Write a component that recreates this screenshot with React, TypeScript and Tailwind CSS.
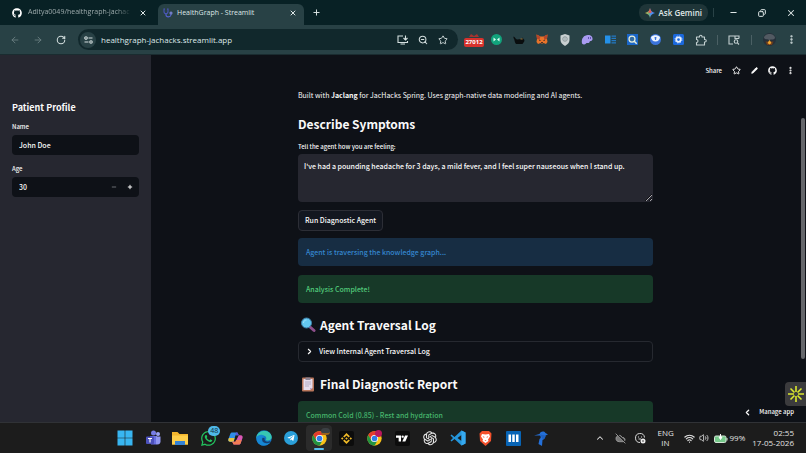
import { useState, type ReactNode } from "react";
import {
  ArrowLeft,
  ArrowRight,
  ChevronLeft,
  ChevronRight,
  ChevronUp,
  CloudOff,
  Copy,
  EllipsisVertical,
  Minus,
  Pencil,
  Plus,
  RotateCw,
  Star,
  Volume2,
  Wifi,
  X,
  ZoomOut,
} from "lucide-react";
import { FaGithub, FaTelegramPlane, FaWhatsapp } from "react-icons/fa";
import { AiOutlineOpenAI } from "react-icons/ai";
import { SiBinance } from "react-icons/si";

function IconButton({ label, className = "", children }: { label: string; className?: string; children: ReactNode }) {
  return (
    <button type="button" aria-label={label} className={`flex size-[18px] shrink-0 items-center justify-center ${className}`}>
      {children}
    </button>
  );
}

function ChromeLogo({ size = 15 }: { size?: number }) {
  return (
    <svg width={size} height={size} viewBox="0 0 48 48">
      <circle cx="24" cy="24" r="23" fill="#fbc116" />
      <path d="M4 12.500A23 23 0 0 1 44 12.500H24L14 29.800Z" fill="#e33b2e" />
      <path d="M4 12.500A23 23 0 0 0 24 47L34 29.700 24 35.500 14 29.800Z" fill="#229342" />
      <circle cx="24" cy="24" r="11.500" fill="#fff" />
      <circle cx="24" cy="24" r="9" fill="#2f7de8" />
    </svg>
  );
}

function GeminiSpark() {
  return (
    <svg width="10" height="10" viewBox="0 0 24 24">
      <defs>
        <linearGradient id="spark" x1="0" y1="0.500" x2="1" y2="0.500">
          <stop offset="0" stopColor="#e6c34a" />
          <stop offset="0.400" stopColor="#6fae7c" />
          <stop offset="0.600" stopColor="#4c8df6" />
          <stop offset="1" stopColor="#4a86f0" />
        </linearGradient>
      </defs>
      <path d="M12 0C13.500 7 17 10.500 24 12 17 13.500 13.500 17 12 24 10.500 17 7 13.500 0 12 7 10.500 10.500 7 12 0Z" fill="url(#spark)" />
      <path d="M12 0C13 5 14.500 8 17 10L12 12 7 10C9.500 8 11 5 12 0Z" fill="#e5584c" />
    </svg>
  );
}

function Stethoscope() {
  return (
    <svg width="10" height="10" viewBox="0 0 20 20" fill="none" strokeWidth="2.200">
      <path d="M4 2H2v5c0 6 8 6 8 0V2H8" stroke="#4a55b8" />
      <path d="M6 11v3c0 5 9 5 10 0v-2" stroke="#5563cf" />
      <circle cx="16" cy="10" r="2" stroke="#7c86d8" />
    </svg>
  );
}

function TabStrip() {
  return (
    <header className="flex h-[25px] shrink-0 items-end bg-[#082125] text-[#dfe7e7]">
      <div className="flex h-[25px] w-[158px] shrink-0 items-center pl-3">
        <FaGithub className="size-[10px] shrink-0 text-white" />
        <span className="ml-[6px] w-[104px] bg-linear-to-r from-[#a8b5b6] from-85% to-[#082125] bg-clip-text text-[7px] whitespace-nowrap text-transparent">
          Aditya0049/healthgraph-jachac
        </span>
        <button type="button" aria-label="Close tab" className="ml-[7px]">
          <X size={8} strokeWidth={3} />
        </button>
      </div>
      <div className="flex h-[21px] w-[146px] shrink-0 items-center rounded-t-md bg-[#284145] pb-[3px] pl-[5px]">
        <Stethoscope />
        <span className="ml-1 flex-1 text-[7px] whitespace-nowrap">HealthGraph - Streamlit</span>
        <button type="button" aria-label="Close tab" className="mr-[7px]">
          <X size={8} strokeWidth={3} />
        </button>
      </div>
      <button type="button" aria-label="New tab" className="ml-2 flex h-[25px] items-center">
        <Plus size={9} strokeWidth={2.500} />
      </button>
      <div className="ml-auto flex h-[25px] items-center">
        <button type="button" className="flex h-[17px] items-center gap-1 rounded-lg bg-[#1f3538] px-[6px] text-[8px] font-semibold">
          <GeminiSpark />
          Ask Gemini
        </button>
        <span className="ml-[5px] h-[9px] w-px bg-[#294246]" />
        <IconButton label="Minimize" className="ml-[10px]"><Minus size={9} strokeWidth={3} /></IconButton>
        <IconButton label="Restore" className="ml-[11px]"><Copy size={8} strokeWidth={3} className="-scale-x-100" /></IconButton>
        <IconButton label="Close window" className="mr-[6px] ml-[11px]"><X size={10} strokeWidth={2.500} /></IconButton>
      </div>
    </header>
  );
}

function Extensions() {
  return (
    <div className="ml-[7px] flex w-[245px] shrink-0 items-center justify-between">
      <IconButton label="Blocked requests" className="flex-col">
        <svg width="12" height="5" viewBox="0 0 12 5"><path d="M1 4 3 1l3 2 3-2 2 3Z" fill="#a3342f" /></svg>
        <span className="rounded-xs bg-[#d8322d] px-px text-[6px] leading-[9px] font-bold text-white">27012</span>
      </IconButton>
      <IconButton label="Green extension">
        <svg width="11" height="11" viewBox="0 0 22 22"><circle cx="11" cy="11" r="11" fill="#12a37c" /><path d="m5 7 5 4-5 4Zm12 0-5 4 5 4Z" fill="#d8fff2" /></svg>
      </IconButton>
      <IconButton label="Black cat">
        <svg width="12" height="10" viewBox="0 0 24 20"><path d="M1 3c3 0 3 5 7 6l9-1 2-3 2 3c3 2 2 5 0 7l-2 3H7C3 17 4 9 1 6Z" fill="#090d0e" /><path d="M15 7h5l-1 2h-4Z" fill="#93753c" /></svg>
      </IconButton>
      <IconButton label="Wallet fox">
        <svg width="12" height="11" viewBox="0 0 24 22">
          <path d="m1 1 8 4h6l8-4-1 9 1 6-3 4-5-2-3 2-3-2-5 2-3-4 1-6Z" fill="#e8732a" />
          <path d="m1 1 8 4-2 6-5-1Zm22 0-8 4 2 6 5-1Z" fill="#b5462a" />
          <path d="m6 11 4 2-3 1Zm12 0-4 2 3 1Z" fill="#2b2523" />
          <path d="M10 16h4l-1 3h-2Z" fill="#3a2a23" />
        </svg>
      </IconButton>
      <IconButton label="Shield">
        <svg width="10" height="12" viewBox="0 0 20 24"><path d="m10 0 9 3v9c0 6-4 9-9 12-5-3-9-6-9-12V3Z" fill="#c9d0d1" /><circle cx="10" cy="10" r="4.500" fill="none" stroke="#8c989b" strokeWidth="2" /><path d="M10 7v6" stroke="#8c989b" strokeWidth="1.500" /></svg>
      </IconButton>
      <IconButton label="Purple extension">
        <svg width="12" height="11" viewBox="0 0 24 22"><path d="M2 19C0 9 6 2 14 2c6 0 10 4 9 9-1 4-5 2-6 5-1 4-5 0-7 3-2 2-5 3-8 0Z" fill="#a99bf1" /><path d="M15 6v4m4-4v4" stroke="#5b4ba8" strokeWidth="1.800" /></svg>
      </IconButton>
      <IconButton label="Reader">
        <svg width="11" height="9" viewBox="0 0 22 18"><path d="M0 1h11v16H0Z" fill="#2491e8" /><path d="M13 2h9M13 6.500h9M13 11h9M13 15.500h9" stroke="#2379c4" strokeWidth="2.500" /></svg>
      </IconButton>
      <IconButton label="Page search">
        <svg width="11" height="11" viewBox="0 0 22 22"><path d="M0 0h22v22H0Z" fill="#1b67c9" /><circle cx="10" cy="10" r="6" fill="#326ca3" stroke="#e8eedb" strokeWidth="2.500" /><path d="m14.500 14.500 5 5" stroke="#e8eedb" strokeWidth="3" /></svg>
      </IconButton>
      <IconButton label="Privacy">
        <svg width="11" height="11" viewBox="0 0 22 22"><circle cx="11" cy="11" r="11" fill="#3b74dc" /><path d="M2 6c5-5 13-5 18 0 0 5-4 9-9 9S2 11 2 6Z" fill="#edf4ff" /><path d="M9 6h4l-1 6h-2Z" fill="#3b74dc" /></svg>
      </IconButton>
      <IconButton label="Blue settings">
        <svg width="11" height="11" viewBox="0 0 22 22"><rect width="22" height="22" rx="3" fill="#1b68dc" /><circle cx="11" cy="11" r="4.500" fill="none" stroke="#e7f1ff" strokeWidth="3.500" /><circle cx="11" cy="11" r="7" fill="none" stroke="#e7f1ff" strokeWidth="1.500" strokeDasharray="3 2.500" /></svg>
      </IconButton>
      <IconButton label="Extensions">
        <svg width="12" height="12" viewBox="0 0 24 24" fill="none" stroke="#c3d0d1" strokeWidth="2.200" strokeLinejoin="round">
          <path d="M3 6h6V5a2 2 0 0 1 5 0v1h5v5h1a2 2 0 0 1 0 5h-1v6H3v-5c4 0 4-6 0-6Z" />
        </svg>
      </IconButton>
    </div>
  );
}

function Toolbar() {
  return (
    <nav className="flex h-[30px] shrink-0 items-center border-b border-[#1a2c30] bg-[#284145] text-[#d4dfdf]">
      <div className="flex items-center gap-[5px] pl-[6px]">
        <IconButton label="Back" className="text-[#6f8386]"><ArrowLeft size={10} /></IconButton>
        <IconButton label="Forward" className="text-[#6f8386]"><ArrowRight size={10} /></IconButton>
        <IconButton label="Reload"><RotateCw size={10} strokeWidth={2.500} /></IconButton>
      </div>
      <div className="ml-2 flex h-[21px] min-w-0 flex-1 items-center rounded-full bg-[#11282c] pr-[6px] pl-[2px]">
        <span className="flex size-4 shrink-0 items-center justify-center rounded-full bg-[#284145]">
          <svg width="9" height="8" viewBox="0 0 18 16" fill="none" stroke="#d4dfdf" strokeWidth="2.200">
            <circle cx="4" cy="4" r="2.500" />
            <path d="M9 4h8M1 12h8" />
            <circle cx="14" cy="12" r="2.500" />
          </svg>
        </span>
        <input aria-label="Address" defaultValue="healthgraph-jachacks.streamlit.app" className="ml-[5px] min-w-0 flex-1 bg-transparent text-[8px] text-[#dfe9e9] outline-none" />
        <div className="flex gap-[2px]">
          <IconButton label="Install app">
            <svg width="12" height="10" viewBox="0 0 24 20" fill="none" stroke="currentColor" strokeWidth="2.200"><path d="M12 2H2v13h19v-3M7 18h9M17 1v9m-4-4 4 4 4-4" /></svg>
          </IconButton>
          <IconButton label="Zoom"><ZoomOut size={10} strokeWidth={2.500} /></IconButton>
          <IconButton label="Bookmark"><Star size={10} strokeWidth={2.200} /></IconButton>
        </div>
      </div>
      <Extensions />
      <div className="flex items-center pr-[6px]">
        <span className="mx-[7px] h-[10px] w-px bg-[#4b6064]" />
        <IconButton label="Tab search">
          <svg width="12" height="10" viewBox="0 0 24 20" fill="none" stroke="#c3d0d1" strokeWidth="2.200"><path d="M10 18H2V2h20v5M14 2v5h8" /><circle cx="16" cy="13" r="3.500" /><path d="m19 16 3 3" /></svg>
        </IconButton>
        <span className="mx-2 h-[10px] w-px bg-[#4b6064]" />
        <IconButton label="Profile">
          <svg width="13" height="13" viewBox="0 0 26 26"><circle cx="13" cy="13" r="13" fill="#26303a" /><path d="M2 10c0-5 6-8 11-8s11 3 11 8c-3 5-8 2-11 4C9 12 5 14 2 10Z" fill="#525a62" /><path d="M5 17h16l-3 7H8Z" fill="#6b3d1d" /><path d="m13 14 4 6-4 3-4-3Z" fill="#efa42f" /></svg>
        </IconButton>
        <IconButton label="Browser menu" className="ml-[4px]"><EllipsisVertical size={11} strokeWidth={3} /></IconButton>
      </div>
    </nav>
  );
}

function Sidebar() {
  const [age, setAge] = useState(30);
  return (
    <aside className="w-[151px] shrink-0 bg-[#262730] px-3 pt-[45px]">
      <h2 className="text-[9px] leading-4 font-bold">Patient Profile</h2>
      <label htmlFor="name" className="mt-[6px] block text-[6px] leading-[10px] font-medium">Name</label>
      <input id="name" defaultValue="John Doe" className="mt-[3px] block h-5 w-full rounded bg-[#0e1117] px-[7px] text-[7px] font-medium outline-none" />
      <label htmlFor="age" className="mt-[9px] block text-[6px] leading-[10px] font-medium">Age</label>
      <div className="mt-[3px] flex h-5 items-center rounded bg-[#0e1117] pr-px">
        <input id="age" inputMode="numeric" value={age} onChange={(e) => setAge(Number(e.target.value) || 0)} className="min-w-0 flex-1 bg-transparent pl-[7px] text-[7px] font-medium outline-none" />
        <button type="button" aria-label="Decrease age" onClick={() => setAge(age - 1)} className="flex size-4 items-center justify-center text-[#8a8b91]"><Minus size={6} strokeWidth={3} /></button>
        <button type="button" aria-label="Increase age" onClick={() => setAge(age + 1)} className="flex size-4 items-center justify-center"><Plus size={6} strokeWidth={4} /></button>
      </div>
    </aside>
  );
}

function Magnifier() {
  return (
    <svg width="16" height="16" viewBox="0 0 32 32">
      <path d="m19 19 9 8" stroke="#8d4f8b" strokeWidth="6" strokeLinecap="round" />
      <circle cx="13" cy="12" r="10" fill="#63c7ef" stroke="#3c7fa8" strokeWidth="2" />
      <path d="M7 12c0-4 3-6 6-6" stroke="#a5e5fb" strokeWidth="2" fill="none" />
    </svg>
  );
}

function Clipboard() {
  return (
    <svg width="16" height="16" viewBox="0 0 32 32">
      <rect x="4" y="3" width="24" height="28" rx="2" fill="#b9775c" />
      <path d="M7 6h18v18l-5 4H7Z" fill="#e6dcec" />
      <path d="m25 24-5 4v-4Z" fill="#b8a4c8" />
      <path d="M11 3h10v5H11Z" fill="#8b8393" />
      <path d="M10 12h12M10 16h12M10 20h8" stroke="#a79db7" strokeWidth="1.500" />
    </svg>
  );
}

function MainArea() {
  return (
    <main className="relative flex min-w-0 flex-1 overflow-hidden bg-[#0e1117]">
      <div className="min-w-0 flex-1 overflow-hidden">
        <div className="flex h-[30px] items-center justify-end pr-[1px]">
          <button type="button" className="mr-[5px] text-[6px] font-medium">Share</button>
          <IconButton label="Favorite"><Star size={9} strokeWidth={2.500} /></IconButton>
          <IconButton label="Edit"><Pencil size={7} fill="currentColor" /></IconButton>
          <IconButton label="View source"><FaGithub className="size-[9px]" /></IconButton>
          <IconButton label="App menu"><EllipsisVertical size={9} strokeWidth={3.500} /></IconButton>
        </div>
        <div className="mx-auto w-full max-w-[355px] pt-1">
          <p className="text-[7px] leading-3">Built with <strong>Jaclang</strong> for JacHacks Spring. Uses graph-native data modeling and AI agents.</p>
          <h2 className="mt-3 text-[12px] leading-[22px] font-bold">Describe Symptoms</h2>
          <label htmlFor="symptoms" className="mt-[7px] block text-[6px] leading-[10px] font-medium">Tell the agent how you are feeling:</label>
          <textarea
            id="symptoms"
            defaultValue="I've had a pounding headache for 3 days, a mild fever, and I feel super nauseous when I stand up."
            className="mt-[2px] block h-12 w-full resize-y rounded bg-[#262730] px-[6px] py-[6px] text-[7px] leading-3 font-medium outline-none scheme-dark"
          />
          <button type="button" className="mt-2 flex h-[21px] items-center rounded border border-[#2c2e36] bg-[#131720] px-[6px] text-[7px] font-medium">Run Diagnostic Agent</button>
          <p className="mt-[7px] flex h-7 items-center rounded bg-[#172d43] px-2 text-[7px] font-medium text-[#3587cf]">Agent is traversing the knowledge graph...</p>
          <p className="mt-[9px] flex h-7 items-center rounded bg-[#173928] px-2 text-[7px] font-medium text-[#52cb7b]">Analysis Complete!</p>
          <h2 className="mt-[11px] flex items-center gap-1 pl-[2px] text-[12px] leading-[22px] font-bold"><Magnifier />Agent Traversal Log</h2>
          <details className="mt-[5px] rounded border border-[#262930] text-[7px] font-medium">
            <summary className="flex h-[19px] list-none items-center gap-[5px] px-[6px]"><ChevronRight size={9} strokeWidth={3} />View Internal Agent Traversal Log</summary>
          </details>
          <h2 className="mt-[11px] flex items-center gap-1 pl-[2px] text-[12px] leading-[22px] font-bold"><Clipboard />Final Diagnostic Report</h2>
          <p className="mt-[6px] flex h-7 items-center rounded bg-[#173928] px-2 text-[7px] font-medium text-[#46b56c]">Common Cold (0.85) - Rest and hydration</p>
        </div>
      </div>
      <div className="w-[6px] shrink-0 pt-[63px]">
        <div className="ml-px h-[241px] w-1 rounded-full bg-[#65676b]" />
      </div>
      <button type="button" className="absolute right-3 bottom-1 flex items-center gap-[7px] text-[6px] leading-3 font-medium"><ChevronLeft size={9} strokeWidth={3.500} />Manage app</button>
      <button type="button" aria-label="Open assistant" className="absolute right-0 bottom-4 flex h-6 w-[21px] items-center justify-center rounded-l bg-[#3b3b3d]">
        <svg width="16" height="16" viewBox="0 0 32 32" stroke="#dce92e" strokeWidth="3.200">
          <path d="M16 0v12M16 20v12M0 16h12M20 16h12M5 5l8 8M19 19l8 8M5 27l8-8M19 13l8-8" />
        </svg>
      </button>
    </main>
  );
}

function Taskbar() {
  return (
    <footer className="flex h-[31px] shrink-0 items-center border-t border-[#303236] bg-[#1c1c1c] pr-3 pl-[116px] text-[#e2e2e2]">
      <div className="flex w-[434px] shrink-0 items-center justify-between">
        <IconButton label="Start">
          <svg width="16" height="16" viewBox="0 0 16 16"><path d="M.500.500h7.200v7.200H.500ZM8.300.500h7.200v7.200H8.300ZM.500 8.300h7.200v7.200H.500ZM8.300 8.300h7.200v7.200H8.300Z" fill="#38b6f1" /></svg>
        </IconButton>
        <IconButton label="Teams">
          <svg width="16" height="16" viewBox="0 0 32 32"><circle cx="17" cy="6" r="5" fill="#777de5" /><circle cx="26" cy="8" r="4" fill="#9aa2f4" /><path d="M10 12h14v17H12Z" fill="#686ee0" /><path d="M22 13h9v10c0 5-5 7-9 5Z" fill="#8f96f1" /><rect x="2" y="13" width="16" height="15" rx="2" fill="#4b50ba" /><path d="M6 17h8M10 17v8" stroke="#fff" strokeWidth="2.200" /></svg>
        </IconButton>
        <IconButton label="File Explorer">
          <svg width="16" height="14" viewBox="0 0 32 28"><path d="M0 2h11l4 4h17v21H0Z" fill="#f4b62d" /><path d="M0 9h32v18H0Z" fill="#ffcf4a" /><path d="M6 20h20v8H6Z" fill="#3583d5" /></svg>
        </IconButton>
        <IconButton label="WhatsApp, 48 unread" className="relative">
          <FaWhatsapp className="size-[17px] text-[#22c35e]" />
          <span className="absolute -top-[3px] -right-[3px] rounded-full bg-[#4fb9e8] px-[2px] text-[7px] leading-[10px] text-[#102b3a]">48</span>
        </IconButton>
        <IconButton label="Copilot">
          <svg width="15" height="15" viewBox="0 0 32 32">
            <path d="M9 3h11l3 6h-7l-4 14H5c-4 0-5-3-4-6L5 6c1-2 2-3 4-3Z" fill="#2f8ee8" />
            <path d="M2 15h12l-2 8H5c-4 0-5-3-4-6Z" fill="#e6c343" />
            <path d="M23 9h4c4 0 5 3 4 6l-4 11c-1 2-2 3-4 3H12l-3-6h7Z" fill="#d957b5" />
            <path d="M17 19h12l-2 7c-1 2-2 3-4 3H12l-3-6h7Z" fill="#f17c54" />
            <path d="M17 3h3l3 6h-7Z" fill="#5b55d9" />
          </svg>
        </IconButton>
        <IconButton label="Edge">
          <svg width="16" height="16" viewBox="0 0 32 32">
            <circle cx="16" cy="16" r="15.500" fill="#1378c8" />
            <path d="M1 13C4-1 29-3 31.500 14c0 6-7 9-12 6 3-4 0-9-6-9C8 11 3 13 1 16Z" fill="#37c6b2" />
            <path d="M1 14c3-5 12-7 16-1-5 0-7 5-4 10 3 4 9 5 15 2C20 36-1 32 1 14Z" fill="#1687d4" />
            <path d="M13 16c-3 8 5 13 15 9 0-1 1-1 1-3-7 3-13 1-12-6Z" fill="#163f70" />
          </svg>
        </IconButton>
        <IconButton label="Telegram">
          <span className="flex size-[14px] items-center justify-center rounded-full bg-[#2a9fd9]"><FaTelegramPlane className="size-2 text-white" /></span>
        </IconButton>
        <IconButton label="Chrome" className="relative">
          <span className="absolute -top-1 -left-1 h-[26px] w-[26px] rounded bg-[#2b2b2b]" />
          <span className="relative"><ChromeLogo /></span>
          <span className="absolute -top-px -right-[2px] h-[7px] w-[9px] rounded-full border-b-2 border-[#9a641d] bg-[#3b4043]" />
          <span className="absolute -bottom-[3px] left-1 h-[2px] w-[10px] rounded-full bg-[#57bdeb]" />
        </IconButton>
        <IconButton label="Binance">
          <span className="flex size-[15px] items-center justify-center rounded-xs bg-[#0c0c0c]"><SiBinance className="size-[11px] text-[#eeb927]" /></span>
        </IconButton>
        <IconButton label="Chrome profile" className="relative">
          <ChromeLogo />
          <span className="absolute top-px right-px size-[7px] rounded-full bg-[#b8175c]" />
        </IconButton>
        <IconButton label="TradingView">
          <span className="flex size-[15px] items-center justify-center rounded-xs bg-[#0c0c0c]">
            <svg width="12" height="7" viewBox="0 0 36 20" fill="#fff"><path d="M0 1h15v18H8V8H0ZM27 1h9l-8 18h-9Z" /><circle cx="20" cy="4.500" r="3.500" /></svg>
          </span>
        </IconButton>
        <IconButton label="ChatGPT"><AiOutlineOpenAI className="size-[18px]" /></IconButton>
        <IconButton label="Visual Studio Code">
          <svg width="16" height="16" viewBox="0 0 32 32"><path d="m23 1 8 4v22l-8 4L9 18l-6 5-2-2 5-5-5-5 2-2 6 5Zm0 9-8 6 8 6Z" fill="#2496dc" fillRule="evenodd" /><path d="m23 1 8 4v22l-8 4Z" fill="#36aaf0" /></svg>
        </IconButton>
        <IconButton label="Brave">
          <svg width="13" height="15" viewBox="0 0 26 30"><path d="m6 0h14l5 5-1 15-11 10L2 20 1 5Z" fill="#f4512c" /><path d="m6 6 7 1 7-1 2 5-4 6 1 3-6 4-6-4 1-3-4-6Z" fill="#fff" /><path d="m7 10 4 2-1 2ZM19 10l-4 2 1 2ZM11 18h4l-2 2Z" fill="#f4512c" /></svg>
        </IconButton>
        <IconButton label="Library">
          <svg width="15" height="15" viewBox="0 0 30 30"><rect width="30" height="30" rx="2" fill="#0864b5" /><path d="M5 7h5v15H5ZM12.500 7h5v15h-5ZM20 7h5v15h-5Z" fill="#fff" /></svg>
        </IconButton>
        <IconButton label="Blue bird">
          <svg width="14" height="15" viewBox="0 0 28 30"><path d="m0 9 11-3c3-6 9-6 12-2l5 3-5 2c0 5-2 7-6 9l-1 12-7-4 2-10c3-2 3-4 1-7Z" fill="#2470d9" /><path d="m12 7 11 2c0 4-2 6-5 8Z" fill="#1d5fc0" /></svg>
        </IconButton>
      </div>
      <div className="ml-auto flex items-center text-[8px] leading-[10px]">
        <IconButton label="Show hidden icons"><ChevronUp size={10} strokeWidth={2.500} /></IconButton>
        <IconButton label="Cloud storage paused" className="ml-[2px]"><CloudOff size={11} fill="#777" className="text-[#999]" /></IconButton>
        <IconButton label="Sync status" className="ml-[2px]">
          <svg width="11" height="11" viewBox="0 0 22 22" fill="none" stroke="#d8d8d8" strokeWidth="2"><path d="M10 19A9 9 0 1 1 19 9M6 8h2M12 8h2M7 12h5" /><circle cx="16" cy="16" r="5" fill="#ededed" stroke="none" /><path d="M14 16h4" stroke="#444" /></svg>
        </IconButton>
        <span className="ml-2 w-4 text-center">ENG<br />IN</span>
        <Wifi size={11} strokeWidth={2.500} className="ml-[11px]" />
        <Volume2 size={10} strokeWidth={2} className="ml-1" />
        <svg width="14" height="9" viewBox="0 0 28 18" className="ml-[5px]"><rect x="1" y="4" width="23" height="13" rx="3" fill="#76c98a" stroke="#d6e8d8" strokeWidth="2" /><path d="M26 8v5" stroke="#d6e8d8" strokeWidth="2" /><path d="M13 0v6m-3 0h6l-3 5Z" stroke="#fff" strokeWidth="2" fill="#fff" /></svg>
        <span className="ml-px">99%</span>
        <time dateTime="2026-05-17T02:55" className="ml-[7px] text-right">02:55<br />17-05-2026</time>
      </div>
    </footer>
  );
}

export default function App() {
  return (
    <div className="flex h-screen flex-col overflow-hidden font-['Open_Sans','Noto_Sans',sans-serif]">
      <TabStrip />
      <Toolbar />
      <div className="flex min-h-0 flex-1 font-['Noto_Sans_CJK_SC','Noto_Sans',sans-serif] text-[#fafafa]">
        <Sidebar />
        <MainArea />
      </div>
      <Taskbar />
    </div>
  );
}
